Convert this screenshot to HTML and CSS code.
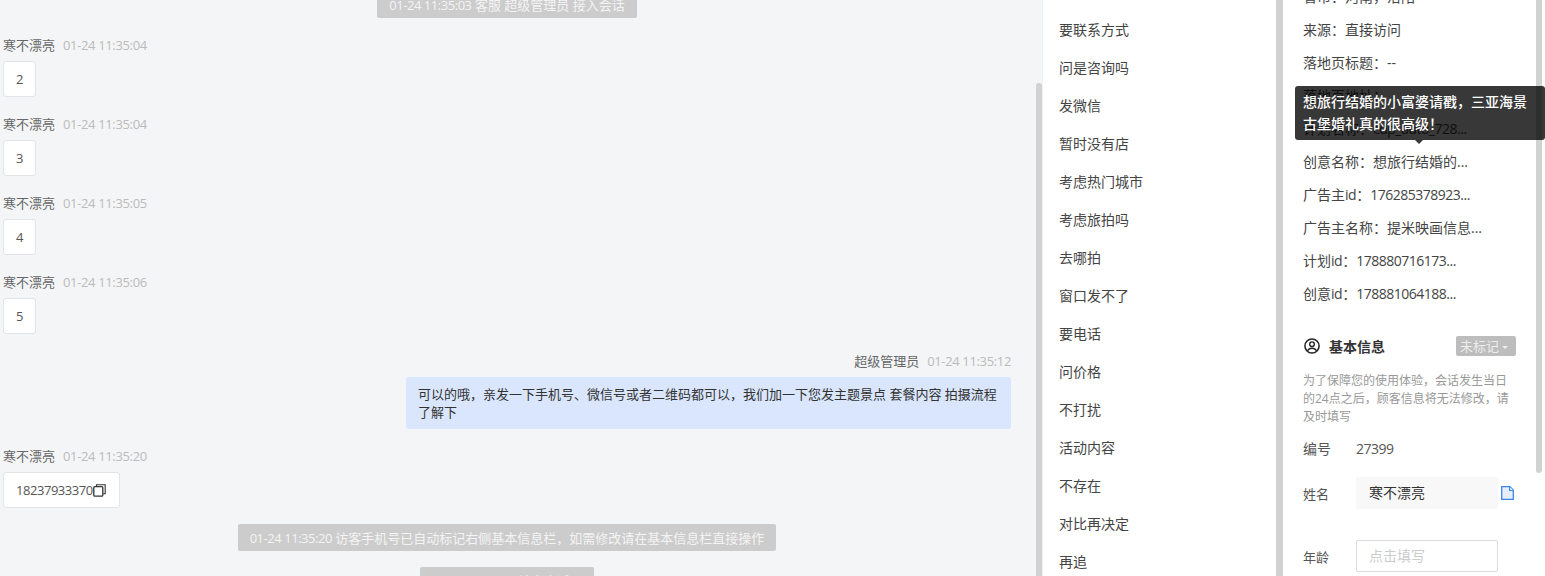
FILE: index.html
```html
<!DOCTYPE html>
<html lang="zh-CN">

<head>
    <meta charset="UTF-8">
    <title>会话详情</title>
    <link rel="stylesheet" href="styles.css">
</head>

<body>
    <div class="page">
        <!-- Chat -->
        <section class="chat">
            <div class="chat-list">
                <div class="sys-msg sys-first"><span class="num">01-24 11:35:03</span> 客服 超级管理员 接入会话</div>

                <div class="msg">
                    <div class="msg-head"><span class="msg-name">寒不漂亮</span><span class="msg-time">01-24 11:35:04</span></div>
                    <div class="bubble">2</div>
                </div>
                <div class="msg">
                    <div class="msg-head"><span class="msg-name">寒不漂亮</span><span class="msg-time">01-24 11:35:04</span></div>
                    <div class="bubble">3</div>
                </div>
                <div class="msg">
                    <div class="msg-head"><span class="msg-name">寒不漂亮</span><span class="msg-time">01-24 11:35:05</span></div>
                    <div class="bubble">4</div>
                </div>
                <div class="msg">
                    <div class="msg-head"><span class="msg-name">寒不漂亮</span><span class="msg-time">01-24 11:35:06</span></div>
                    <div class="bubble">5</div>
                </div>

                <div class="msg msg-self">
                    <div class="msg-head"><span class="msg-name">超级管理员</span><span class="msg-time">01-24 11:35:12</span></div>
                    <div class="bubble bubble-self">可以的哦，亲发一下手机号、微信号或者二维码都可以，我们加一下您发主题景点 套餐内容 拍摄流程了解下</div>
                </div>

                <div class="msg">
                    <div class="msg-head"><span class="msg-name">寒不漂亮</span><span class="msg-time">01-24 11:35:20</span></div>
                    <div class="bubble bubble-phone"><span class="num">18237933370</span><svg class="copy-icon" viewBox="0 0 13 13" width="13" height="13"><path d="M3.5 2.5V.8h8.7v9h-2" fill="none" stroke="#333" stroke-width="1.1"/><rect x=".8" y="2.6" width="9" height="9.6" rx="1" fill="none" stroke="#333" stroke-width="1.3"/></svg></div>
                </div>

                <div class="sys-msg sys-tip"><span class="num">01-24 11:35:20</span> 访客手机号已自动标记右侧基本信息栏，如需修改请在基本信息栏直接操作</div>
                <div class="sys-msg sys-last"><span class="num">01-24 11:35:25</span> 结束会话</div>
            </div>
            <div class="thumb thumb-chat"></div>
        </section>

        <!-- Quick tags -->
        <section class="tags">
            <div class="tag-item">要联系方式</div>
            <div class="tag-item">问是咨询吗</div>
            <div class="tag-item">发微信</div>
            <div class="tag-item">暂时没有店</div>
            <div class="tag-item">考虑热门城市</div>
            <div class="tag-item">考虑旅拍吗</div>
            <div class="tag-item">去哪拍</div>
            <div class="tag-item">窗口发不了</div>
            <div class="tag-item">要电话</div>
            <div class="tag-item">问价格</div>
            <div class="tag-item">不打扰</div>
            <div class="tag-item">活动内容</div>
            <div class="tag-item">不存在</div>
            <div class="tag-item">对比再决定</div>
            <div class="tag-item">再追</div>
        </section>
        <div class="thumb thumb-tags"></div>

        <!-- Visitor info -->
        <section class="info">
            <div class="info-lines">
                <div class="info-line">省市：河南，洛阳</div>
                <div class="info-line">来源：直接访问</div>
                <div class="info-line">落地页标题：--</div>
                <div class="info-line">落地页地址：</div>
                <div class="info-line">计划名称：<span class="num">cdp_auto_728...</span></div>
                <div class="info-line">创意名称：想旅行结婚的...</div>
                <div class="info-line">广告主<span class="num">id</span>：<span class="num">176285378923...</span></div>
                <div class="info-line">广告主名称：提米映画信息...</div>
                <div class="info-line">计划<span class="num">id</span>：<span class="num">178880716173...</span></div>
                <div class="info-line">创意<span class="num">id</span>：<span class="num">178881064188...</span></div>
            </div>

            <div class="basic-head">
                <svg class="user-icon" viewBox="0 0 16 16" width="16" height="16"><circle cx="8" cy="8" r="7.1" fill="none" stroke="#222" stroke-width="1.5"/><circle cx="8" cy="6.2" r="2.3" fill="none" stroke="#222" stroke-width="1.4"/><path d="M3.6 12.8c.8-1.8 2.4-2.6 4.4-2.6s3.6.8 4.4 2.6" fill="none" stroke="#222" stroke-width="1.4"/></svg>
                <span class="basic-title">基本信息</span>
                <span class="mark-tag">未标记<i class="caret"></i></span>
            </div>
            <p class="basic-desc">为了保障您的使用体验，会话发生当日的24点之后，顾客信息将无法修改，请及时填写</p>

            <div class="field field-id"><label>编号</label><span class="num">27399</span></div>
            <div class="field field-name">
                <label>姓名</label>
                <div class="field-box field-filled">寒不漂亮</div>
                <svg class="doc-icon" viewBox="0 0 13 14" width="13" height="14"><path d="M.7.7h8.2l3.4 3.4v9.2H.7z" fill="#e4eefc" stroke="#3f86ec" stroke-width="1.3"/><path d="M8.6.7v3.8h3.7" fill="#fff" stroke="#3f86ec" stroke-width="1.2"/></svg>
            </div>
            <div class="field field-age">
                <label>年龄</label>
                <div class="field-box field-empty">点击填写</div>
            </div>
            <div class="thumb thumb-info"></div>
        </section>

        <div class="tooltip">想旅行结婚的小富婆请戳，三亚海景古堡婚礼真的很高级！</div>
    </div>
</body>

</html>
```

FILE: styles.css
```css
html, body {
    margin: 0;
    height: 100%;
    overflow: hidden;
}

body {
    font-family: "Open Sans", "Noto Sans CJK SC", sans-serif;
    font-size: 13px;
    color: #333;
}

.page {
    display: flex;
    height: 576px;
    width: 1545px;
    overflow: hidden;
    position: relative;
    background-color: #fff;
}

.num {
    letter-spacing: -0.035em;
}

.thumb {
    background-color: #d2d2d2;
    flex-shrink: 0;
}

/* Chat */
.chat {
    display: flex;
    width: 1042px;
    background-color: #f4f5f7;
}

.chat-list {
    width: 1036px;
    flex-shrink: 0;
    padding: 0 25px 0 3px;
    box-sizing: border-box;
    display: flex;
    flex-direction: column;
    align-items: flex-start;
}

.thumb-chat {
    width: 6px;
    margin-top: 83px;
    border-radius: 3px 3px 0 0;
}

.sys-msg {
    align-self: center;
    flex-shrink: 0;
    background-color: #cccccc;
    color: #f4f4f4;
    height: 27px;
    line-height: 28px;
    padding: 0 12px;
    border-radius: 2px;
    white-space: nowrap;
    box-sizing: border-box;
}

.sys-first {
    margin-top: -9px;
}

.sys-tip {
    margin-top: 16px;
}

.sys-last {
    margin-top: 16px;
    width: 174px;
}

.msg {
    margin-top: 18px;
    flex-shrink: 0;
}

.msg-head {
    height: 18px;
    line-height: 18px;
    margin-bottom: 7px;
    white-space: nowrap;
}

.msg-name {
    color: #666;
}

.msg-time {
    color: #bbb;
    margin-left: 8px;
    letter-spacing: -0.027em;
}

.bubble {
    display: inline-block;
    vertical-align: top;
    box-sizing: border-box;
    height: 36px;
    line-height: 34px;
    min-width: 33px;
    padding: 0 12px;
    text-align: center;
    background-color: #fff;
    border: 1px solid #e2e4e8;
    border-radius: 3px;
    color: #555;
}

.msg-self {
    align-self: flex-end;
    display: flex;
    flex-direction: column;
    align-items: flex-end;
}

.bubble-self {
    width: 605px;
    height: 52px;
    padding: 8px 12px;
    line-height: 18px;
    text-align: left;
    background-color: #d9e6fd;
    border: 0;
    color: #333;
}

.bubble-phone {
    display: inline-flex;
    align-items: center;
    width: 117px;
    padding: 0 12px;
}

.copy-icon {
    flex-shrink: 0;
}

/* Quick tags */
.tags {
    width: 234px;
    flex-shrink: 0;
    padding: 11px 0 0 16px;
    box-sizing: border-box;
    border-left: 1px solid #eef0f2;
    font-size: 14px;
}

.tag-item {
    height: 38px;
    line-height: 38px;
    color: #444;
    white-space: nowrap;
}

.thumb-tags {
    width: 7px;
}

/* Visitor info */
.info {
    position: relative;
    flex: 1;
    padding-left: 20px;
}

.info-lines {
    margin-top: -20px;
    font-size: 14px;
}

.info-line {
    height: 33px;
    line-height: 33px;
    color: #444;
    white-space: nowrap;
}

.basic-head {
    display: flex;
    align-items: center;
    height: 20px;
    margin-top: 26px;
    width: 213px;
}

.user-icon {
    margin-left: 1px;
}

.basic-title {
    margin-left: 9px;
    font-size: 14px;
    font-weight: 700;
    color: #333;
}

.mark-tag {
    margin-left: auto;
    width: 60px;
    height: 20px;
    line-height: 20px;
    padding-left: 4px;
    box-sizing: border-box;
    background-color: #bdbdbd;
    color: #eee;
    border-radius: 2px;
    white-space: nowrap;
}

.caret {
    display: inline-block;
    margin-left: 3px;
    vertical-align: 2px;
    border: 3px solid transparent;
    border-top-color: #eee;
    border-bottom: 0;
}

.basic-desc {
    margin: 16px 0 0;
    width: 210px;
    font-size: 12px;
    line-height: 18px;
    color: #999;
}

.field {
    display: flex;
    align-items: center;
    color: #555;
}

.field label {
    width: 53px;
    flex-shrink: 0;
}

.field-id {
    margin-top: 12px;
    height: 20px;
    font-size: 14px;
}

.field-name {
    margin-top: 19px;
}

.field-age {
    margin-top: 31px;
}

.field-box {
    box-sizing: border-box;
    width: 142px;
    height: 32px;
    line-height: 30px;
    padding: 0 12px;
    border: 1px solid transparent;
    border-radius: 2px;
    font-size: 14px;
}

.field-filled {
    background-color: #f8f8f8;
    color: #333;
}

.field-empty {
    border-color: #dcdcdc;
    color: #ccc;
}

.doc-icon {
    margin-left: 3px;
}

.thumb-info {
    position: absolute;
    top: 0;
    left: 253px;
    width: 6px;
    height: 473px;
    border-radius: 0 0 3px 3px;
}

/* Tooltip */
.tooltip {
    position: absolute;
    left: 1295px;
    top: 86px;
    width: 250px;
    height: 54px;
    box-sizing: border-box;
    padding: 5px 18px 5px 8px;
    font-size: 14px;
    font-weight: 500;
    line-height: 22px;
    color: #fff;
    background-color: rgba(0, 0, 0, 0.78);
    border-radius: 3px;
}

.tooltip::after {
    content: "";
    position: absolute;
    left: 120px;
    top: 100%;
    border: 4px solid transparent;
    border-top-color: rgba(0, 0, 0, 0.78);
    border-bottom: 0;
}
```
